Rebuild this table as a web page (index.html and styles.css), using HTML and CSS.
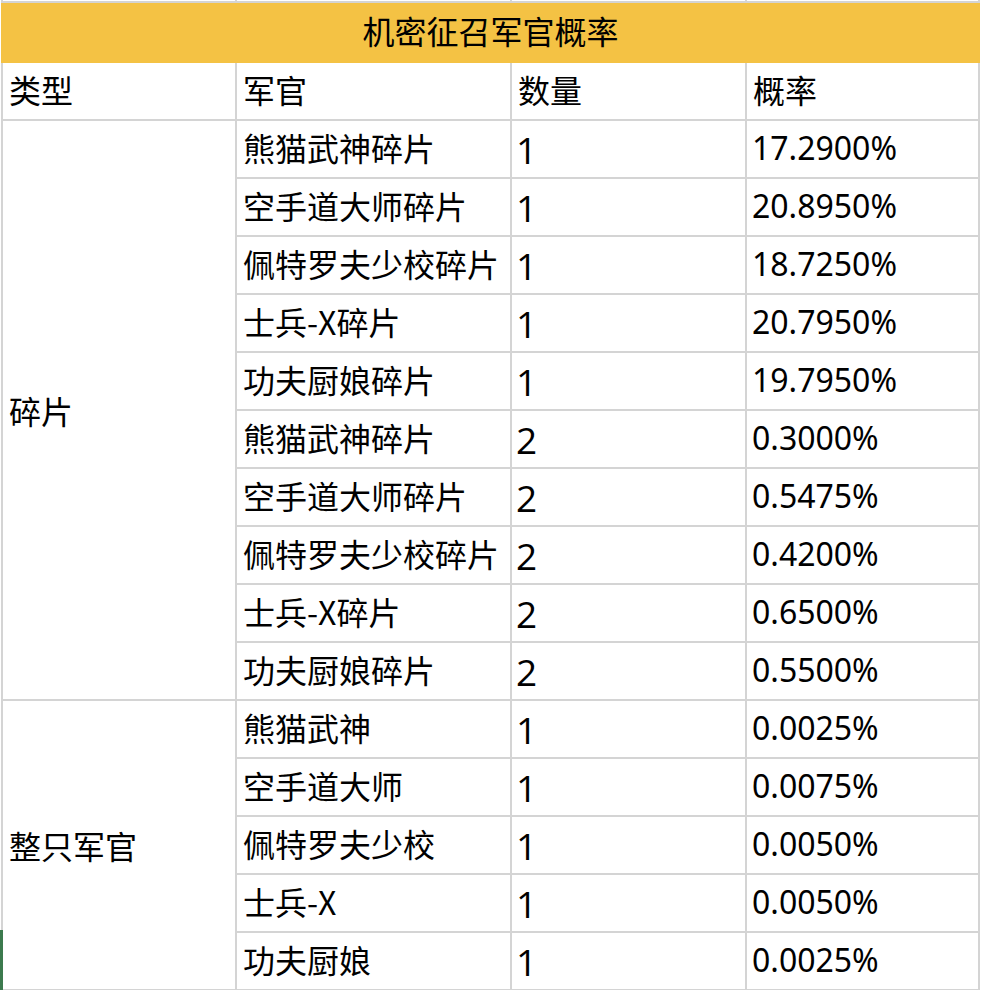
FILE: index.html
```html
<!DOCTYPE html>
<html lang="zh-CN">
<head>
<meta charset="utf-8">
<title>机密征召军官概率</title>
<link rel="stylesheet" href="styles.css">
</head>
<body>
<div class="sheet">
  <div class="grid">
    <div class="cell stub"></div><div class="cell stub"></div><div class="cell stub"></div><div class="cell stub"></div>
    <div class="cell title">机密征召军官概率</div>

    <div class="cell head">类型</div>
    <div class="cell head">军官</div>
    <div class="cell head">数量</div>
    <div class="cell head">概率</div>

    <div class="cell type type-frag">碎片</div>
    <div class="cell name">熊猫武神碎片</div><div class="cell qty">1</div><div class="cell pct">17.2900%</div>
    <div class="cell name">空手道大师碎片</div><div class="cell qty">1</div><div class="cell pct">20.8950%</div>
    <div class="cell name">佩特罗夫少校碎片</div><div class="cell qty">1</div><div class="cell pct">18.7250%</div>
    <div class="cell name">士兵-X碎片</div><div class="cell qty">1</div><div class="cell pct">20.7950%</div>
    <div class="cell name">功夫厨娘碎片</div><div class="cell qty">1</div><div class="cell pct">19.7950%</div>
    <div class="cell name">熊猫武神碎片</div><div class="cell qty">2</div><div class="cell pct">0.3000%</div>
    <div class="cell name">空手道大师碎片</div><div class="cell qty">2</div><div class="cell pct">0.5475%</div>
    <div class="cell name">佩特罗夫少校碎片</div><div class="cell qty">2</div><div class="cell pct">0.4200%</div>
    <div class="cell name">士兵-X碎片</div><div class="cell qty">2</div><div class="cell pct">0.6500%</div>
    <div class="cell name">功夫厨娘碎片</div><div class="cell qty">2</div><div class="cell pct">0.5500%</div>

    <div class="cell type type-whole">整只军官</div>
    <div class="cell name">熊猫武神</div><div class="cell qty">1</div><div class="cell pct">0.0025%</div>
    <div class="cell name">空手道大师</div><div class="cell qty">1</div><div class="cell pct">0.0075%</div>
    <div class="cell name">佩特罗夫少校</div><div class="cell qty">1</div><div class="cell pct">0.0050%</div>
    <div class="cell name">士兵-X</div><div class="cell qty">1</div><div class="cell pct">0.0050%</div>
    <div class="cell name">功夫厨娘</div><div class="cell qty">1</div><div class="cell pct">0.0025%</div>
  </div>
  <div class="row-marker"></div>
</div>
</body>
</html>
```

FILE: styles.css
```css
html, body {
  margin: 0;
  padding: 0;
  background: #ffffff;
}

.sheet {
  position: relative;
  width: 982px;
  height: 990px;
  overflow: hidden;
  background: #ffffff;
}

.grid {
  display: grid;
  grid-template-columns: 232px 273px 233px 231px;
  grid-template-rows: 1px 58px repeat(16, 56px);
  gap: 2px;
  width: 975px;
  margin-left: 1px;
  padding: 0 2px 2px 2px;
  background: #d4d4d4;
  font-family: "Noto Sans CJK SC", sans-serif;
  font-size: 32px;
  color: #000000;
}

.cell {
  background: #ffffff;
  display: flex;
  align-items: center;
  padding-left: 6px;
  white-space: nowrap;
  overflow: visible;
  line-height: 1;
}

.stub {
  padding: 0;
}

.title {
  grid-column: 1 / 5;
  background: #f4c244;
  justify-content: center;
  padding-left: 0;
  margin: 0 -2px -2px -2px;
  padding-bottom: 6px;
}

.head {
  padding-bottom: 4px;
}

.type {
  grid-column: 1;
}

.type-frag {
  grid-row: 4 / span 10;
}

.type-whole {
  grid-row: 14 / span 5;
}

.name {
  padding-bottom: 4px;
}

.qty {
  font-family: "Open Sans", sans-serif;
  font-weight: 400;
  font-size: 37px;
  padding-left: 4px;
  padding-top: 1px;
}

.pct {
  font-family: "Noto Sans", sans-serif;
  font-size: 32px;
  padding-left: 5px;
  padding-bottom: 3px;
}

.row-marker {
  position: absolute;
  left: 0;
  top: 930px;
  width: 3px;
  height: 60px;
  background: #3c7a4e;
}
```
